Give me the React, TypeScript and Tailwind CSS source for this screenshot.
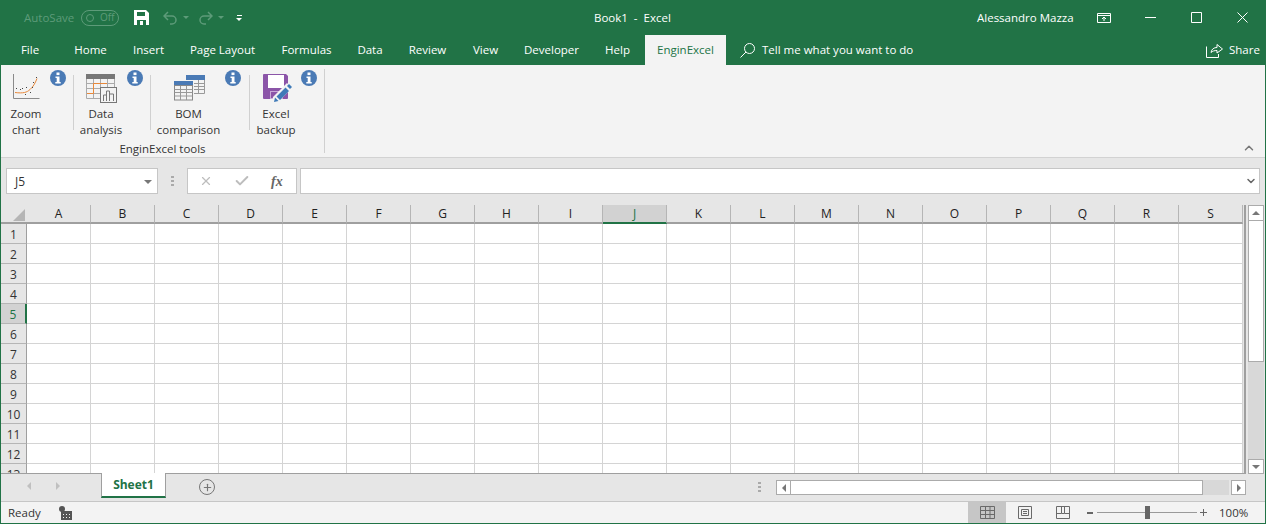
import { ChevronUp, ChevronDown, Check, X, Plus } from "lucide-react";

const font = "font-['Open_Sans','Noto_Sans',sans-serif]";

const tabs = [
  { label: "File", w: "w-[58px]" },
  { label: "Home", w: "w-[63px]" },
  { label: "Insert", w: "w-[53px]" },
  { label: "Page Layout", w: "w-[95px]" },
  { label: "Formulas", w: "w-[73px]" },
  { label: "Data", w: "w-[54px]" },
  { label: "Review", w: "w-[61px]" },
  { label: "View", w: "w-[55px]" },
  { label: "Developer", w: "w-[77px]" },
  { label: "Help", w: "w-[55px]" },
];

const cols = ["A", "B", "C", "D", "E", "F", "G", "H", "I", "J", "K", "L", "M", "N", "O", "P", "Q", "R", "S"];
const rows = [1, 2, 3, 4, 5, 6, 7, 8, 9, 10, 11, 12, 13];

function Info() {
  return (
    <div className="mt-px -ml-px flex h-4 w-4 shrink-0 items-center justify-center rounded-full bg-[#4a7ab5]">
      <svg width="8" height="12" viewBox="0 0 8 12">
        <rect x="2.500" y="0.500" width="3" height="2.600" fill="#fff" />
        <path d="M1.500 4.500h4v5.500h1.200v1.400H1.300V10h1.400V6H1.500z" fill="#fff" />
      </svg>
    </div>
  );
}

function ZoomChartIcon() {
  return (
    <svg width="28" height="27" viewBox="0 0 28 27" className="block">
      <path d="M.5 1v24.500h26" fill="none" stroke="#8a8a8a" />
      <path d="M2 19.500c8 1 12 0 15-3 3-2.500 5-6 7-11" fill="none" stroke="#e8883a" />
      <g fill="#444">
        <rect x="3" y="15" width="1" height="1" />
        <rect x="7" y="16" width="1" height="1" />
        <rect x="9" y="15" width="1" height="1" />
        <rect x="13" y="14" width="1" height="1" />
        <rect x="12" y="21" width="1" height="1" />
        <rect x="17" y="19" width="1" height="1" />
        <rect x="19" y="14" width="1" height="1" />
        <rect x="20" y="9" width="1" height="1" />
        <rect x="23" y="4" width="1" height="1" />
      </g>
    </svg>
  );
}

function DataIcon() {
  return (
    <svg width="32" height="29" viewBox="0 0 32 29" className="block">
      <rect x="0" y="0" width="29" height="5" fill="#777" />
      <path d="M.5 5v19.500h14M28.500 5v8M7.500 5v19M14.500 5v19M21.500 5v8M.5 9.500h28M.5 14.500h14M.5 19.500h14" fill="none" stroke="#aaa" />
      <path d="M21 9.500H7.500v10H1" fill="none" stroke="#e8883a" />
      <rect x="14.500" y="13.500" width="16" height="15" fill="#f3f3f3" stroke="#777" />
      <path d="M17.500 27v-6h3v6M20.500 27V17h3v10M23.500 27v-7h4v7" fill="none" stroke="#777" />
    </svg>
  );
}

function BomIcon() {
  return (
    <svg width="32" height="26" viewBox="0 0 32 26" className="block">
      <rect x="12" y="0" width="19" height="5" fill="#4a7ab5" />
      <path d="M30.500 5v13.500H20M24.500 5v13.500M20 8.500h10.500M20 11.500h10.500M20 14.500h10.500" fill="none" stroke="#999" />
      <rect x="0" y="6" width="19" height="5" fill="#4a7ab5" />
      <rect x="0.500" y="10.500" width="18" height="14.500" fill="#f3f3f3" stroke="#888" />
      <path d="M.5 14.500h18M.5 17.500h18M.5 21h18M6.500 11v14M12.500 11v14" fill="none" stroke="#999" />
    </svg>
  );
}

function BackupIcon() {
  return (
    <svg width="30" height="29" viewBox="0 0 30 29" className="block">
      <path d="M0 1a1 1 0 0 1 1-1h22l2 2v22a1 1 0 0 1-1 1H1a1 1 0 0 1-1-1z" fill="#8b55a8" />
      <rect x="5" y="1" width="16" height="13" fill="#fff" />
      <rect x="7.500" y="17.500" width="12" height="7" fill="none" stroke="#c9a9d8" />
      <path d="M9 29l1-6L24 9l5 5-14 14z" fill="#f3f3f3" />
      <path d="M11 28l1-4.500 3.500 3.500zM13.500 22.500l9-9 3.500 3.500-9 9z" fill="#3f7ab8" />
      <path d="M24 12l2-2 3 3-2 2z" fill="#3f7ab8" />
    </svg>
  );
}

const tools = [
  { lines: ["Zoom", "chart"], w: "w-[50px]", gap: "ml-[7px]", icon: <ZoomChartIcon />, pt: "pt-[4px] pl-[2px]" },
  { lines: ["Data", "analysis"], w: "w-[54px]", gap: "ml-[7px]", icon: <DataIcon />, pt: "pt-[5px] pl-[2px]" },
  { lines: ["BOM", "comparison"], w: "w-[75px]", gap: "ml-[8px]", icon: <BomIcon />, pt: "pt-[6px] pl-[3px]" },
  { lines: ["Excel", "backup"], w: "w-[52px]", gap: "ml-[7px]", icon: <BackupIcon />, pt: "pt-[5px] pl-[4px]" },
];

function GridLinesIcon() {
  return (
    <svg width="15" height="13" viewBox="0 0 15 13">
      <path d="M.5.5h14v12H.5zM.5 4.500h14M.5 8.500h14M5.500.5v12M10 .5v12" fill="none" stroke="#6a6a6a" />
    </svg>
  );
}

export default function App() {
  return (
    <div className={`${font} flex h-[524px] w-[1266px] flex-col overflow-hidden border-x border-[#217346] text-[11.5px] text-[#333]`}>
      {/* title bar */}
      <div className="flex h-[35px] shrink-0 items-center bg-[#217346] text-white">
        <span className="ml-[23px] w-[57px] whitespace-nowrap text-[#5d9b79]">AutoSave</span>
        <div className="flex h-4 w-[38px] items-center rounded-full border border-[#5d9b79] pl-[4px] text-[10px] text-[#5d9b79]">
          <span className="h-2 w-2 rounded-full border border-[#5d9b79]" />
          <span className="ml-[6px]">Off</span>
        </div>
        <svg width="15" height="15" viewBox="0 0 15 15" className="ml-[15px]">
          <path d="M0 0h12l3 3v12H0z" fill="#fff" />
          <rect x="3" y="2" width="8" height="4" fill="#217346" />
          <rect x="3" y="10" width="9" height="5" fill="#217346" />
          <rect x="6" y="11" width="3" height="4" fill="#fff" />
        </svg>
        <svg width="15" height="14" viewBox="0 0 15 14" className="ml-[14px]" fill="none" stroke="#5d9b79" strokeWidth="1.500">
          <path d="M5 1L1 5l4 4M1 5h8a4 4 0 0 1 0 8H7" />
        </svg>
        <span className="ml-[5px] h-0 w-0 border-x-[3px] border-t-[3px] border-x-transparent border-t-[#5d9b79]" />
        <svg width="15" height="14" viewBox="0 0 15 14" className="ml-[9px]" fill="none" stroke="#5d9b79" strokeWidth="1.500">
          <path d="M10 1l4 4-4 4M14 5H6a4 4 0 0 0 0 8h2" />
        </svg>
        <span className="ml-[5px] h-0 w-0 border-x-[3px] border-t-[3px] border-x-transparent border-t-[#5d9b79]" />
        <div className="ml-[12px] flex flex-col items-center gap-[2px]">
          <span className="h-px w-[5px] bg-white" />
          <span className="h-0 w-0 border-x-[3px] border-t-[3px] border-x-transparent border-t-white" />
        </div>
        <span className="ml-[352px] w-[76px] whitespace-pre text-center">Book1  -  Excel</span>
        <span className="ml-[307px] w-[94px] whitespace-nowrap">Alessandro Mazza</span>
        <svg width="14" height="10" viewBox="0 0 14 10" className="ml-[26px]" fill="none" stroke="#fff">
          <path d="M.5.5h13v9H.5zM.5 2.500h13M7 8V4M5 6l2-2 2 2" />
        </svg>
        <svg width="11" height="11" viewBox="0 0 11 11" className="ml-[34px]" fill="none" stroke="#fff">
          <path d="M0 5.500h11" />
        </svg>
        <svg width="11" height="11" viewBox="0 0 11 11" className="ml-[35px]" fill="none" stroke="#fff">
          <path d="M.5.5h10v10H.5z" />
        </svg>
        <svg width="11" height="11" viewBox="0 0 11 11" className="ml-[35px]" fill="none" stroke="#fff">
          <path d="M.5.5l10 10M10.500.5l-10 10" />
        </svg>
      </div>

      {/* tabs */}
      <div className="flex h-[30px] shrink-0 items-center bg-[#217346] text-white">
        {tabs.map((t) => (
          <div key={t.label} className={`${t.w} flex h-full items-center justify-center whitespace-nowrap`}>
            {t.label}
          </div>
        ))}
        <div className="flex h-full w-[81px] items-center justify-center bg-[#f3f3f3] text-[#217346]">EnginExcel</div>
        <svg width="15" height="15" viewBox="0 0 15 15" className="ml-[14px]" fill="none" stroke="#fff">
          <circle cx="9.500" cy="5.500" r="5" />
          <path d="M6 9l-5.500 5.500" />
        </svg>
        <span className="ml-[7px] whitespace-nowrap">Tell me what you want to do</span>
        <svg width="17" height="15" viewBox="0 0 17 15" className="ml-auto" fill="none" stroke="#fff">
          <path d="M.5 3.500v11h12V11M5 9.500C5.500 6 8 4.500 11 4.500V1.500l5.500 4.500L11 10V7.500C8.500 7.500 6.500 8 5 9.500z" />
        </svg>
        <span className="ml-[6px] mr-[6px] w-[30px]">Share</span>
      </div>

      {/* ribbon */}
      <div className="flex h-[93px] shrink-0 border-b border-[#d2d2d2] bg-[#f3f3f3]">
        <div className="mb-[4px] mt-[4px] flex w-[324px] flex-col border-r border-[#d0d0d0]">
          <div className="flex">
            {tools.map((tool, i) => (
              <div key={tool.lines[0]} className="flex">
                <div className={`${tool.w} flex flex-col items-center`}>
                  <div className={`flex h-[37px] items-start justify-center ${tool.pt}`}>{tool.icon}</div>
                  {tool.lines.map((line) => (
                    <span key={line} className="h-4 leading-4">{line}</span>
                  ))}
                </div>
                <Info />
                {i < 3 && <div className={`${tool.gap} mt-[6px] h-[55px] w-px bg-[#d0d0d0]`} />}
              </div>
            ))}
          </div>
          <div className="mt-[3px] flex h-[15px] items-center justify-center leading-[15px]">EnginExcel tools</div>
        </div>
        <div className="ml-auto mr-[9px] flex items-end pb-[2px]">
          <ChevronUp size={14} strokeWidth={2.500} className="text-[#777]" />
        </div>
      </div>

      {/* formula bar */}
      <div className="flex h-[47px] shrink-0 items-start bg-[#e6e6e6] pl-[5px] pr-[5px] pt-[10px]">
        <div className="flex h-[26px] w-[152px] items-center justify-between border border-[#c6c6c6] bg-white pl-2 pr-[5px] pt-px text-[12px]">
          <span>J5</span>
          <span className="h-0 w-0 border-x-[4px] border-t-[4px] border-x-transparent border-t-[#777]" />
        </div>
        <div className="mx-[13px] flex h-[26px] w-[3px] flex-col items-center justify-center gap-[2px]">
          <span className="h-[2px] w-[3px] bg-[#aaa]" />
          <span className="h-[2px] w-[3px] bg-[#aaa]" />
          <span className="h-[2px] w-[3px] bg-[#aaa]" />
        </div>
        <div className="flex h-[26px] w-[110px] items-center border border-[#c6c6c6] bg-white">
          <X size={14} strokeWidth={2} className="ml-[11px] text-[#bdbdbd]" />
          <Check size={16} strokeWidth={3} className="ml-[21px] text-[#bdbdbd]" />
          <span className="ml-[21px] font-['Liberation_Serif',serif] text-[14px] font-bold italic text-[#666]">fx</span>
        </div>
        <div className="ml-[3px] flex h-[26px] flex-1 items-center justify-end border border-[#c6c6c6] bg-white pr-[2px]">
          <ChevronDown size={12} strokeWidth={3} className="text-[#666]" />
        </div>
      </div>

      {/* sheet */}
      <div className="flex min-h-0 flex-1 bg-[#e6e6e6] text-[12px]">
        <div className="flex min-w-0 flex-1 flex-col overflow-hidden border-b border-r-2 border-[#9f9f9f]">
          <div className="flex h-[19px] shrink-0">
            <div className="relative h-full w-[26px] shrink-0 border-b-2 border-[#9f9f9f]">
              <span className="absolute bottom-px right-[2px] h-0 w-0 border-b-[12px] border-l-[12px] border-b-[#b5b5b5] border-l-transparent" />
            </div>
            {cols.map((c) => (
              <div
                key={c}
                className={`flex h-full w-[64px] shrink-0 items-center justify-center border-r border-[#b5b5b5] text-[#222] ${
                  c === "J" ? "border-b-2 border-b-[#217346] bg-[#d2d2d2] text-[#217346]" : "border-b-2 border-b-[#9f9f9f]"
                }`}
              >
                {c}
              </div>
            ))}
          </div>
          {rows.map((r) => (
            <div key={r} className="flex h-5 shrink-0">
              <div
                className={`flex h-full w-[26px] shrink-0 items-center justify-center border-b border-[#b5b5b5] pt-[2px] ${
                  r === 5 ? "border-r-2 border-r-[#217346] bg-[#d2d2d2] text-[#217346]" : "border-r border-r-[#9f9f9f]"
                }`}
              >
                {r}
              </div>
              {cols.map((c) => (
                <div key={c} className="h-full w-[64px] shrink-0 border-b border-r border-[#d4d4d4] bg-white" />
              ))}
            </div>
          ))}
        </div>
        {/* vertical scrollbar */}
        <div className="flex w-[19px] shrink-0 flex-col items-start pl-[2px]">
          <div className="flex h-4 w-[16px] items-center justify-center border border-[#ababab] bg-white">
            <span className="h-0 w-0 border-x-[4px] border-b-[4px] border-x-transparent border-b-[#777]" />
          </div>
          <div className="h-[141px] w-[16px] border border-t-0 border-[#ababab] bg-white" />
          <div className="w-[16px] flex-1 bg-[#d8d8d8]" />
          <div className="flex h-[15px] w-[16px] items-center justify-center border border-[#ababab] bg-white">
            <span className="h-0 w-0 border-x-[4px] border-t-[4px] border-x-transparent border-t-[#777]" />
          </div>
        </div>
      </div>

      {/* sheet tabs */}
      <div className="flex h-[28px] shrink-0 items-start border-b border-[#c6c6c6] bg-[#e6e6e6]">
        <div className="ml-[26px] mt-2 flex gap-[25px]">
          <span className="h-0 w-0 border-y-[4px] border-r-[4px] border-y-transparent border-r-[#c0c0c0]" />
          <span className="h-0 w-0 border-y-[4px] border-l-[4px] border-y-transparent border-l-[#c0c0c0]" />
        </div>
        <div className="ml-[41px] -mt-px flex h-[25px] w-[65px] items-center justify-center border-x border-b-2 border-x-[#9f9f9f] border-b-[#217346] bg-white pt-px text-[12px] font-bold text-[#217346]">
          Sheet1
        </div>
        <div className="ml-[33px] mt-[5px] flex h-4 w-4 items-center justify-center rounded-full border border-[#777]">
          <Plus size={11} strokeWidth={2.500} className="text-[#777]" />
        </div>
        <div className="ml-[543px] mt-2 flex flex-col gap-[2px]">
          <span className="h-[2px] w-[3px] bg-[#aaa]" />
          <span className="h-[2px] w-[3px] bg-[#aaa]" />
          <span className="h-[2px] w-[3px] bg-[#aaa]" />
        </div>
        <div className="ml-[15px] mt-[6px] flex h-[15px]">
          <div className="flex w-[15px] items-center justify-center border border-[#ababab] bg-white">
            <span className="h-0 w-0 border-y-[4px] border-r-[4px] border-y-transparent border-r-[#777]" />
          </div>
          <div className="w-[412px] border border-l-0 border-[#ababab] bg-white" />
          <div className="w-[26px] bg-[#d8d8d8]" />
          <div className="ml-[2px] flex w-[15px] items-center justify-center border border-[#ababab] bg-white">
            <span className="h-0 w-0 border-y-[4px] border-l-[4px] border-y-transparent border-l-[#777]" />
          </div>
        </div>
      </div>

      {/* status bar */}
      <div className="flex h-[22px] shrink-0 items-center border-b border-[#217346] bg-[#f3f3f3]">
        <span className="ml-[7px] w-[51px]">Ready</span>
        <svg width="14" height="14" viewBox="0 0 14 14">
          <circle cx="3" cy="3" r="3" fill="#555" />
          <path d="M2 5h11v9H2z" fill="#555" />
          <path d="M4 8h1v1H4zM7 8h1v1H7zM10 8h1v1h-1zM4 11h1v1H4zM7 11h1v1H7zM10 11h1v1h-1z" fill="#f3f3f3" />
        </svg>
        <div className="ml-[895px] flex h-full w-[38px] items-center justify-center bg-[#c6c6c6]">
          <GridLinesIcon />
        </div>
        <svg width="14" height="13" viewBox="0 0 14 13" className="ml-[12px]" fill="none" stroke="#6a6a6a">
          <path d="M.5.5h13v12H.5zM3.500 3.500h7v6h-7zM5 5.500h4M5 7.500h4" />
        </svg>
        <svg width="14" height="13" viewBox="0 0 14 13" className="ml-[24px]" fill="none" stroke="#6a6a6a">
          <path d="M.5.5h13v12H.5zM.5 7.500h5V.5M5.500 7.500h3V.5M8.500 7.500h5" />
        </svg>
        <span className="ml-[17px] h-[2px] w-[6px] bg-[#666]" />
        <div className="relative ml-[4px] h-px w-[100px] bg-[#9a9a9a]">
          <span className="absolute -top-[6px] left-[48px] h-[13px] w-[5px] bg-[#666]" />
        </div>
        <span className="relative ml-[3px] h-[7px] w-[7px]">
          <span className="absolute left-0 top-[3px] h-px w-[7px] bg-[#666]" />
          <span className="absolute left-[3px] top-0 h-[7px] w-px bg-[#666]" />
        </span>
        <span className="ml-[12px]">100%</span>
      </div>
    </div>
  );
}
